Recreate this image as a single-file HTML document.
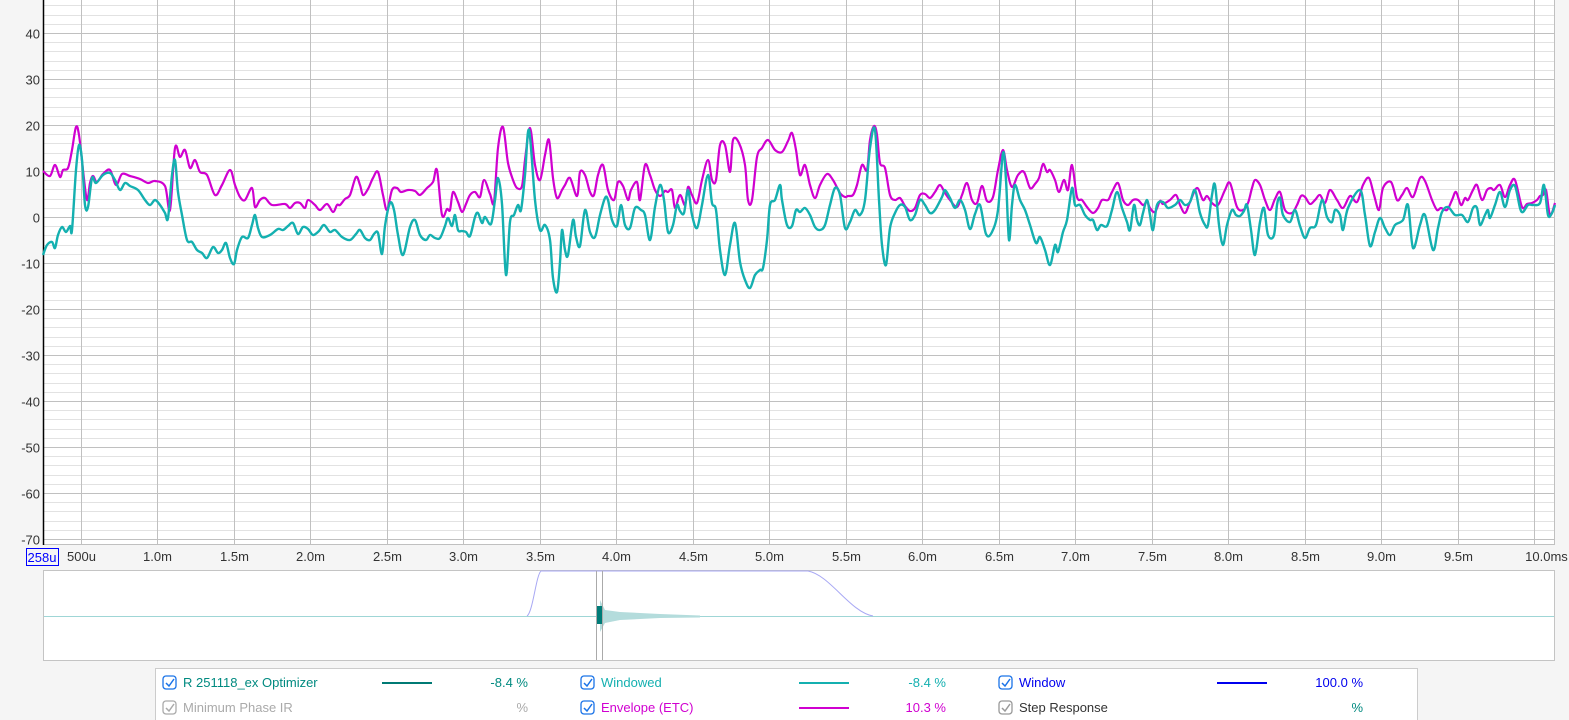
<!DOCTYPE html>
<html><head><meta charset="utf-8"><style>
html,body{margin:0;padding:0;background:#f5f5f5;width:1569px;height:720px;overflow:hidden;font-family:"Liberation Sans",sans-serif;}
svg{position:absolute;left:0;top:0}
text{font-family:"Liberation Sans",sans-serif;font-size:13px;fill:#333}
</style></head><body>
<svg width="1569" height="720" viewBox="0 0 1569 720">
<rect x="43" y="0" width="1512" height="545" fill="#fff"/>
<g id="grid"></g>
<line x1="43.5" y1="0" x2="43.5" y2="545" stroke="#000" stroke-width="1.5"/>
<g id="ylab" text-anchor="end"></g>
<g id="xlab" text-anchor="middle"></g>
<rect x="26.5" y="548.5" width="32" height="17" fill="none" stroke="#00f"/>
<text x="42" y="562" text-anchor="middle" style="fill:#00f">258u</text>
<g id="curves"></g>
<rect x="43.5" y="570.5" width="1511" height="90" fill="#fff" stroke="#c4c4c4"/>
<line x1="44" y1="616.5" x2="1554" y2="616.5" stroke="#9fd6d6"/>
<path d="M527,616 C533,612 536,575 541,571 L808,571 C830,575 850,612 873,616" fill="none" stroke="#a8a8f4"/>
<path d="M600,600 L605,610 L620,612 L660,614 L700,615.5 L700,617.5 L660,618 L620,620 L605,623 L600,632 Z" fill="#b4dcdc"/>
<rect x="597" y="606" width="5" height="18" fill="#007c78"/>
<line x1="596.5" y1="571" x2="596.5" y2="660" stroke="#aaa"/>
<line x1="602.5" y1="571" x2="602.5" y2="660" stroke="#aaa"/>
<rect x="155.5" y="668.5" width="1262" height="60" fill="#fff" stroke="#ccc"/>
<g id="legend"></g>
</svg>
<script>
var ns="http://www.w3.org/2000/svg";
function el(p,t,a,txt){var e=document.createElementNS(ns,t);for(var k in a)e.setAttribute(k,a[k]);if(txt!=null)e.textContent=txt;document.getElementById(p).appendChild(e);return e;}
for(var v=-70;v<=46;v+=2){var y=Math.round(217-4.6*v)+0.5;if(y<0||y>545)continue;var maj=(v%10==0);el("grid","line",{x1:44,x2:1555,y1:y,y2:y,stroke:maj?"#c0c0c0":"#e2e2e2","stroke-width":1});
if(maj)el("ylab","text",{x:40,y:y+5},String(v));}
var xl=["500u","1.0m","1.5m","2.0m","2.5m","3.0m","3.5m","4.0m","4.5m","5.0m","5.5m","6.0m","6.5m","7.0m","7.5m","8.0m","8.5m","9.0m","9.5m","10.0ms"];
for(var i=0;i<20;i++){var x=Math.round(80.5+76.5*i)+0.5;el("grid","line",{x1:x,x2:x,y1:0,y2:545,stroke:"#c0c0c0"});el("xlab","text",{x:i==19?x+12:x,y:561},xl[i]);}
el("grid","line",{x1:1554.5,x2:1554.5,y1:0,y2:545,stroke:"#c0c0c0"});
el("grid","line",{x1:43,x2:1555,y1:544.5,y2:544.5,stroke:"#c0c0c0"});
function smooth(s){var a=s.trim().split(/\s+/).map(function(p){return p.split(",").map(Number);});
var d="M"+a[0][0]+","+a[0][1];for(var i=0;i<a.length-1;i++){var p0=a[Math.max(i-1,0)],p1=a[i],p2=a[i+1],p3=a[Math.min(i+2,a.length-1)];
var c1x=p1[0]+(p2[0]-p0[0])/6,c1y=p1[1]+(p2[1]-p0[1])/6,c2x=p2[0]-(p3[0]-p1[0])/6,c2y=p2[1]-(p3[1]-p1[1])/6;
d+=" C"+c1x.toFixed(1)+","+c1y.toFixed(1)+" "+c2x.toFixed(1)+","+c2y.toFixed(1)+" "+p2[0]+","+p2[1];}return d;}
var mag="43,171 50,176 55,165 60,177 63,170 68,168 72,150 76,127 79,135 83,170 87,200 90,183 93,176 97,182 103,174 110,170 116,185 122,174 130,176 140,179 148,183 155,181 165,186 170,210 175,148 180,157 185,150 190,168 195,160 200,172 207,175 215,195 222,185 230,170 235,185 240,197 245,200 252,188 255,207 260,200 265,198 272,205 285,204 290,208 295,203 300,203 305,208 308,200 315,205 320,210 327,204 333,212 337,205 340,205 345,199 350,195 356,177 360,185 363,195 368,189 373,178 378,172 383,195 387,210 392,190 397,188 401,192 408,190 415,191 420,195 427,188 433,182 437,170 442,215 447,209 450,210 453,192 458,202 462,212 466,204 470,195 475,192 480,197 484,180 490,194 494,202 498,148 503,127 508,163 513,180 517,188 522,186 525,160 530,128 535,165 540,180 545,155 549,140 553,178 557,198 562,190 565,185 570,178 577,196 580,172 585,175 590,192 594,195 598,175 603,165 608,190 614,200 618,182 623,186 628,200 631,190 637,182 640,200 645,165 650,175 655,190 660,196 665,191 668,192 672,190 675,208 680,195 685,205 688,187 692,195 697,203 702,180 708,160 712,180 716,180 720,145 725,145 730,172 733,140 739,143 745,165 748,200 752,200 757,157 762,148 768,140 775,150 782,152 788,141 792,133 796,150 800,175 805,165 810,185 815,198 820,185 827,174 833,180 840,193 845,197 848,196 853,195 857,185 862,165 867,170 870,140 874,126 877,135 880,163 885,168 890,195 895,200 900,198 905,206 910,211 915,208 920,195 925,194 930,198 935,192 940,185 945,193 950,200 957,207 962,195 967,183 972,200 977,203 982,186 987,201 993,197 998,170 1003,150 1007,170 1012,187 1018,175 1024,172 1030,188 1035,184 1039,178 1043,164 1047,172 1050,170 1055,180 1059,192 1064,180 1068,190 1072,165 1077,197 1082,200 1087,207 1093,213 1098,208 1102,200 1108,200 1112,192 1118,183 1123,200 1128,205 1133,200 1138,200 1143,205 1147,202 1150,208 1155,212 1160,201 1163,204 1170,200 1176,195 1180,205 1185,213 1190,202 1197,188 1203,200 1207,196 1212,203 1218,205 1225,190 1230,183 1237,207 1243,210 1248,203 1252,188 1255,180 1260,185 1265,200 1270,210 1275,199 1280,192 1285,210 1292,213 1297,205 1301,196 1305,197 1310,204 1315,200 1320,195 1325,203 1330,190 1337,200 1343,208 1350,196 1357,202 1363,185 1369,178 1374,195 1379,210 1383,188 1391,182 1397,200 1402,195 1407,188 1413,197 1420,178 1425,181 1432,200 1437,210 1441,208 1447,210 1452,200 1456,192 1461,205 1465,198 1468,200 1473,190 1477,185 1482,200 1487,190 1491,188 1494,190 1500,185 1505,197 1510,185 1515,180 1522,207 1527,204 1532,203 1537,200 1540,196 1543,195 1546,190 1550,215 1555,203";
var teal="43,255 47,245 52,242 55,248 58,235 62,227 66,232 70,226 72,230 76,170 79,145 82,160 85,205 88,207 92,178 96,183 103,175 110,173 115,180 120,190 125,183 130,186 138,190 145,200 150,205 155,200 160,205 165,213 168,218 172,175 175,160 178,192 182,215 187,240 192,242 197,250 202,253 207,258 213,247 218,253 222,250 226,243 230,258 234,264 237,250 242,237 248,238 252,225 255,215 258,228 262,237 270,235 278,229 283,230 288,226 293,223 298,234 303,227 308,229 313,235 319,231 324,225 330,232 335,230 342,237 350,240 356,234 360,230 365,238 370,240 374,234 378,233 382,254 385,226 390,203 394,210 398,235 403,255 410,227 415,220 420,235 426,240 430,235 435,238 440,238 445,226 448,218 452,226 455,215 458,230 462,231 466,232 470,236 475,217 478,213 482,223 485,217 491,224 495,200 498,178 502,204 506,275 510,222 514,215 518,205 521,210 525,175 529,130 535,200 540,230 545,225 550,240 553,278 557,292 560,262 562,230 565,250 568,255 573,220 576,237 580,246 585,210 590,232 595,237 600,215 605,198 608,200 612,220 617,226 621,205 625,225 630,228 635,208 641,210 645,215 650,240 655,207 660,185 664,200 668,232 673,225 677,205 680,211 684,213 688,190 692,215 697,228 702,205 708,175 712,203 716,210 720,250 725,275 730,245 735,223 740,262 745,280 750,288 755,275 760,270 763,268 767,240 770,205 775,200 780,185 782,200 787,225 792,226 796,210 800,212 805,208 810,215 815,227 820,230 825,225 830,205 835,188 840,195 845,228 850,222 855,210 860,215 865,200 870,148 875,130 879,200 882,245 886,265 890,228 895,213 900,205 905,207 910,220 915,215 920,200 925,205 930,213 935,210 942,197 945,190 950,198 955,208 960,200 965,210 970,229 975,214 980,205 986,234 992,232 998,210 1003,153 1006,180 1009,240 1012,205 1015,185 1020,200 1025,210 1030,225 1036,243 1040,237 1045,250 1050,265 1055,245 1058,252 1063,232 1067,220 1072,188 1075,205 1080,205 1085,215 1090,220 1093,220 1097,230 1101,225 1107,226 1112,210 1117,192 1122,208 1127,222 1130,230 1134,205 1137,220 1140,225 1143,213 1147,200 1150,215 1153,230 1157,205 1163,202 1168,208 1175,205 1180,200 1185,205 1190,202 1195,190 1200,213 1205,225 1208,225 1212,195 1215,185 1219,225 1223,245 1227,225 1232,210 1236,215 1240,216 1244,211 1247,205 1251,230 1255,255 1260,222 1264,208 1268,235 1274,235 1277,205 1280,198 1283,215 1290,222 1295,210 1300,226 1305,238 1310,228 1316,225 1322,200 1327,217 1332,222 1335,210 1340,215 1343,230 1348,208 1360,190 1365,215 1370,246 1375,232 1380,218 1385,228 1390,235 1395,225 1403,220 1408,205 1413,248 1420,225 1425,215 1433,250 1438,228 1442,212 1448,207 1455,215 1462,215 1468,222 1473,208 1477,208 1480,225 1485,215 1488,210 1490,218 1495,205 1500,192 1505,207 1510,190 1515,186 1520,208 1523,212 1528,205 1533,205 1540,203 1544,185 1548,215 1552,213 1555,205";
el("curves","path",{d:smooth(mag),fill:"none",stroke:"#d000d0","stroke-width":2.2,"stroke-linejoin":"round"});
el("curves","path",{d:smooth(teal),fill:"none",stroke:"#14b0b0","stroke-width":2.4,"stroke-linejoin":"round"});
function cb(x,y,c){el("legend","rect",{x:x,y:y,width:13,height:13,rx:3,fill:"#fff",stroke:c,"stroke-width":1.3});el("legend","path",{d:"M"+(x+3)+","+(y+7)+" l3,3 l5,-7",fill:"none",stroke:c,"stroke-width":1.5});}
var items=[[163,676,"#1a73e8","R 251118_ex Optimizer","#008a80","#007a74",382,"-8.4 %",528],
[163,701,"#aaa","Minimum Phase IR","#aaa",null,382,"%",528],
[581,676,"#1a73e8","Windowed","#14b0b0","#14b0b0",799,"-8.4 %",946],
[581,701,"#1a73e8","Envelope (ETC)","#d000d0","#d000d0",799,"10.3 %",946],
[999,676,"#1a73e8","Window","#0000ee","#0000ee",1217,"100.0 %",1363],
[999,701,"#999","Step Response","#333",null,1217,"%",1363]];
items.forEach(function(it){cb(it[0],it[1],it[2]);el("legend","text",{x:it[0]+20,y:it[1]+11,style:"fill:"+it[4]},it[3]);
if(it[5])el("legend","line",{x1:it[6],x2:it[6]+50,y1:it[1]+7,y2:it[1]+7,stroke:it[5],"stroke-width":2});
var vc=it[3]=="Minimum Phase IR"?"#aaa":(it[3]=="Step Response"?"#008a80":it[4]);
el("legend","text",{x:it[8],y:it[1]+11,"text-anchor":"end",style:"fill:"+vc},it[7]);});
</script>
</body></html>
